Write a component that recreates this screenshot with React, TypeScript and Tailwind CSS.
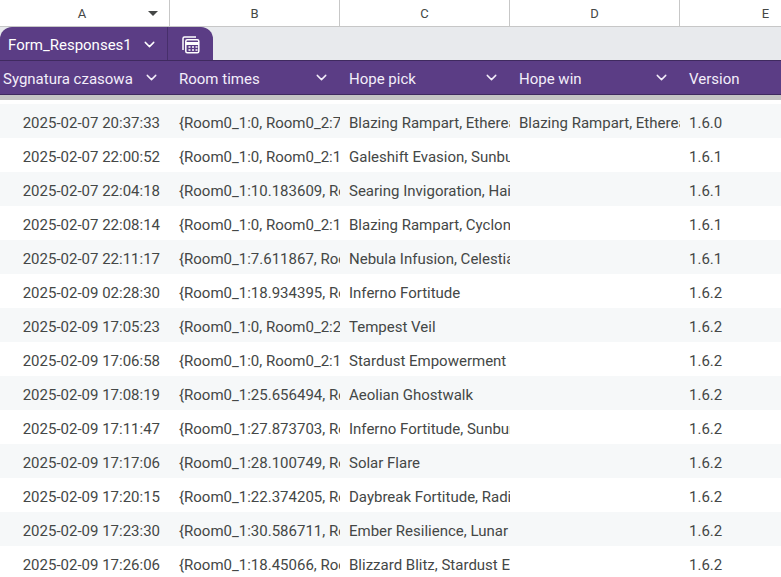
import { ChevronDown } from "lucide-react";

const rows = [
  ["2025-02-07 20:37:33", "{Room0_1:0, Room0_2:7", "Blazing Rampart, Ethereal", "Blazing Rampart, Ethereal", "1.6.0"],
  ["2025-02-07 22:00:52", "{Room0_1:0, Room0_2:1", "Galeshift Evasion, Sunburst", "", "1.6.1"],
  ["2025-02-07 22:04:18", "{Room0_1:10.183609, Room", "Searing Invigoration, Hail", "", "1.6.1"],
  ["2025-02-07 22:08:14", "{Room0_1:0, Room0_2:1", "Blazing Rampart, Cyclone", "", "1.6.1"],
  ["2025-02-07 22:11:17", "{Room0_1:7.611867, Room", "Nebula Infusion, Celestial", "", "1.6.1"],
  ["2025-02-09 02:28:30", "{Room0_1:18.934395, Room", "Inferno Fortitude", "", "1.6.2"],
  ["2025-02-09 17:05:23", "{Room0_1:0, Room0_2:2", "Tempest Veil", "", "1.6.2"],
  ["2025-02-09 17:06:58", "{Room0_1:0, Room0_2:1", "Stardust Empowerment", "", "1.6.2"],
  ["2025-02-09 17:08:19", "{Room0_1:25.656494, Room", "Aeolian Ghostwalk", "", "1.6.2"],
  ["2025-02-09 17:11:47", "{Room0_1:27.873703, Room", "Inferno Fortitude, Sunburst", "", "1.6.2"],
  ["2025-02-09 17:17:06", "{Room0_1:28.100749, Room", "Solar Flare", "", "1.6.2"],
  ["2025-02-09 17:20:15", "{Room0_1:22.374205, Room", "Daybreak Fortitude, Radiant", "", "1.6.2"],
  ["2025-02-09 17:23:30", "{Room0_1:30.586711, Room", "Ember Resilience, Lunar", "", "1.6.2"],
  ["2025-02-09 17:26:06", "{Room0_1:18.45066, Room", "Blizzard Blitz, Stardust Em", "", "1.6.2"],
];

const letters = ["B", "C", "D"];
const headers = ["Room times", "Hope pick", "Hope win"];

function TableIcon() {
  return (
    <svg width="20" height="20" viewBox="0 0 20 20" fill="none" stroke="#fff" strokeWidth="1.5">
      <path d="M2 15V3.500A1.500 1.500 0 0 1 3.500 2H15" />
      <rect x="4.800" y="4.800" width="13" height="13" rx="1.500" />
      <path d="M5 8.500h13" strokeWidth="3" />
      <path d="M7.500 12h2M11 12h2M14.500 12h2M7.500 15h2M11 15h2M14.500 15h2" />
    </svg>
  );
}

export default function App() {
  return (
    <div className="w-[781px] h-[577px] overflow-hidden bg-white text-[15px] text-[#444746] font-['Roboto',sans-serif]">
      {/* Column letters */}
      <div className="flex h-[27px] border-b border-[#c7c7c7] text-[13px] text-[#444746]">
        <div className="relative w-[170px] shrink-0 border-r border-[#c7c7c7] flex items-center justify-center pr-[5px] pt-[1px]">
          A
          <span className="absolute left-[148px] top-[11px] w-0 h-0 border-x-[5px] border-x-transparent border-t-[5px] border-t-[#444746]" />
        </div>
        {letters.map((l) => (
          <div key={l} className="w-[170px] shrink-0 border-r border-[#c7c7c7] flex items-center justify-center pt-[1px]">
            {l}
          </div>
        ))}
        <div className="flex-1 flex items-center justify-center pl-[70px] pt-[1px]">E</div>
      </div>

      {/* Table tab */}
      <div className="flex h-[33px] bg-[#e8eaed]">
        <div className="flex w-[213px] bg-[#5b3d85] rounded-t-[12px] text-white">
          <div className="w-[168px] border-r border-[#472f6b] flex items-center pl-[8px] gap-[9px] pt-[4px]">
            <span className="whitespace-nowrap">Form_Responses1</span>
            <ChevronDown size={17} strokeWidth={2} className="-mt-[2px]" />
          </div>
          <div className="flex-1 flex items-center justify-center pt-[2px]">
            <TableIcon />
          </div>
        </div>
      </div>

      {/* Header row */}
      <div className="flex h-[35px] bg-[#5b3d85] border-y border-[#3f2a5f] text-[#f3eefa]">
        <div className="w-[170px] shrink-0 flex items-center justify-between pl-[3px] pr-[10px] pt-[4px]">
          <span className="whitespace-nowrap">Sygnatura czasowa</span>
          <ChevronDown size={17} strokeWidth={2} className="-mt-[4px]" />
        </div>
        {headers.map((h) => (
          <div key={h} className="w-[170px] shrink-0 flex items-center justify-between pl-[9px] pr-[10px] pt-[4px]">
            <span>{h}</span>
            <ChevronDown size={17} strokeWidth={2} className="-mt-[4px]" />
          </div>
        ))}
        <div className="flex-1 flex items-center pl-[9px] pt-[4px]">Version</div>
      </div>
      <div className="h-[5px] bg-[#c4c4c4]" />
      <div className="h-[4px] bg-white" />

      {/* Data rows */}
      {rows.map((r, i) => (
        <div key={r[0]} className={`flex h-[34px] items-center pt-[5px] ${i % 2 === 0 ? "bg-[#f6f8f9]" : "bg-white"}`}>
          <div className="w-[170px] shrink-0 pr-[10px] text-right whitespace-nowrap">{r[0]}</div>
          <div className="w-[170px] shrink-0 pl-[9px] overflow-hidden whitespace-nowrap">{r[1]}</div>
          <div className="w-[170px] shrink-0 pl-[9px] overflow-hidden whitespace-nowrap">{r[2]}</div>
          <div className="w-[170px] shrink-0 pl-[9px] overflow-hidden whitespace-nowrap">{r[3]}</div>
          <div className="flex-1 pl-[9px]">{r[4]}</div>
        </div>
      ))}
    </div>
  );
}
